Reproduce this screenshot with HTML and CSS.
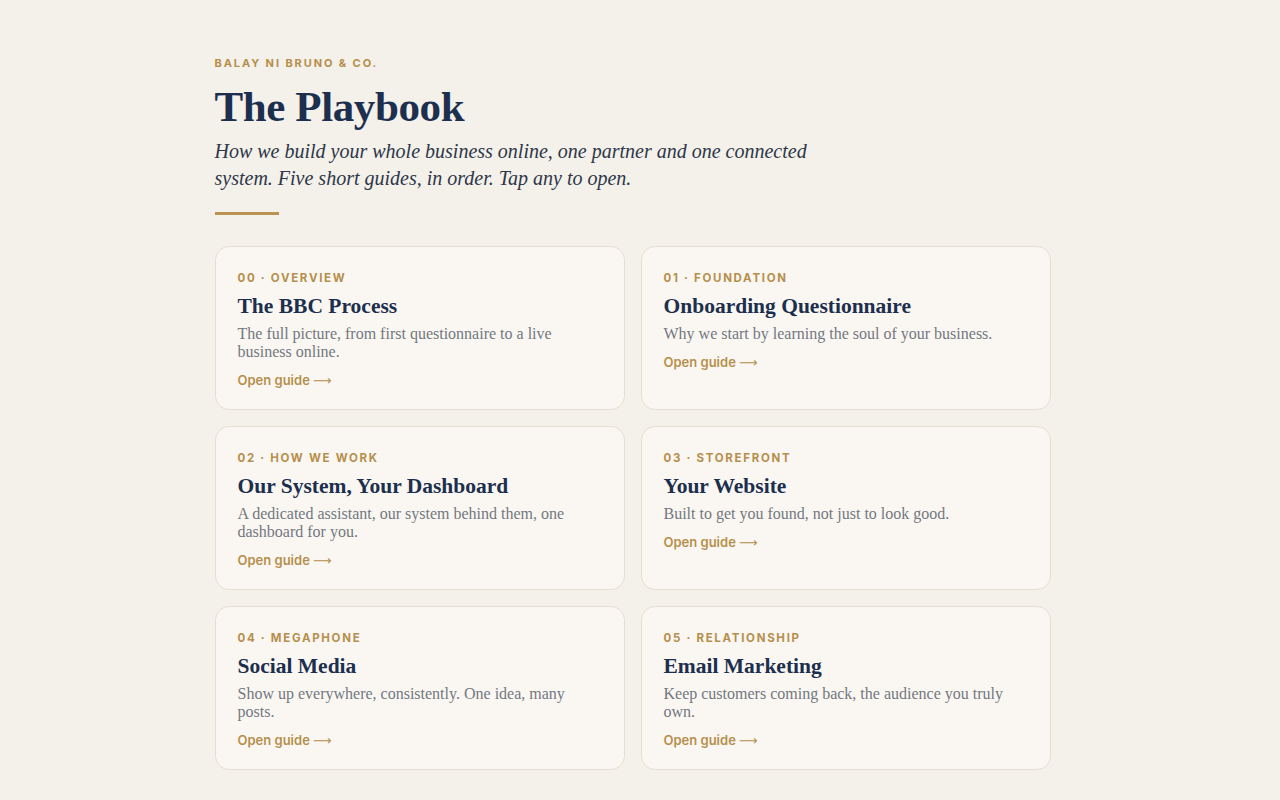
FILE: index.html
```html
<!DOCTYPE html>
<html lang="en">
<head>
<meta charset="UTF-8">
<meta name="viewport" content="width=device-width, initial-scale=1.0">
<title>The Playbook</title>
<link rel="stylesheet" href="styles.css">
</head>
<body>

<div class="container">
    <header class="intro">
        <p class="eyebrow">Balay ni Bruno &amp; Co.</p>
        <h1>The Playbook</h1>
        <p class="lead">How we build your whole business online, one partner and one connected system. Five short guides, in order. Tap any to open.</p>
        <div class="rule"></div>
    </header>

    <div class="guides">
        <a class="card" href="#">
            <span class="tag">00 · Overview</span>
            <h3>The BBC Process</h3>
            <p>The full picture, from first questionnaire to a live business online.</p>
            <span class="more">Open guide <span class="arrow">⟶</span></span>
        </a>
        <a class="card" href="#">
            <span class="tag">01 · Foundation</span>
            <h3>Onboarding Questionnaire</h3>
            <p>Why we start by learning the soul of your business.</p>
            <span class="more">Open guide <span class="arrow">⟶</span></span>
        </a>
        <a class="card" href="#">
            <span class="tag">02 · How we work</span>
            <h3>Our System, Your Dashboard</h3>
            <p>A dedicated assistant, our system behind them, one dashboard for you.</p>
            <span class="more">Open guide <span class="arrow">⟶</span></span>
        </a>
        <a class="card" href="#">
            <span class="tag">03 · Storefront</span>
            <h3>Your Website</h3>
            <p>Built to get you found, not just to look good.</p>
            <span class="more">Open guide <span class="arrow">⟶</span></span>
        </a>
        <a class="card" href="#">
            <span class="tag">04 · Megaphone</span>
            <h3>Social Media</h3>
            <p>Show up everywhere, consistently. One idea, many posts.</p>
            <span class="more">Open guide <span class="arrow">⟶</span></span>
        </a>
        <a class="card" href="#">
            <span class="tag">05 · Relationship</span>
            <h3>Email Marketing</h3>
            <p>Keep customers coming back, the audience you truly own.</p>
            <span class="more">Open guide <span class="arrow">⟶</span></span>
        </a>
    </div>
</div>

</body>
</html>
```

FILE: styles.css
```css
html {
    overflow-y: scroll;
}
body {
    margin: 0;
    padding: 0 15px 0 0;
    background-color: #f4f0ea;
    font-family: "Liberation Serif", "DejaVu Serif", serif;
    color: #1d2f4e;
}
.container {
    max-width: 836px;
    margin: 0 auto;
    padding: 56px 0 145px;
}
.eyebrow {
    margin: 0;
    font-family: Inter, "Noto Sans", sans-serif;
    font-size: 11px;
    line-height: 14px;
    font-weight: 700;
    letter-spacing: 1.9px;
    text-transform: uppercase;
    color: #b68f4c;
}
h1 {
    margin: 13px 0 0;
    font-family: "Liberation Serif", "DejaVu Serif", serif;
    font-size: 43px;
    line-height: 48px;
    font-weight: 700;
    letter-spacing: -0.4px;
    color: #1d2f4e;
}
.lead {
    margin: 7px 0 0;
    max-width: 620px;
    font-size: 20px;
    line-height: 27px;
    font-style: italic;
    color: #2d3748;
}
.rule {
    width: 64px;
    height: 3px;
    margin-top: 20px;
    background-color: #bb9350;
}
.guides {
    display: grid;
    grid-template-columns: 1fr 1fr;
    gap: 16px;
    margin-top: 31px;
}
.card {
    display: flex;
    flex-direction: column;
    align-items: flex-start;
    padding: 23px 22px 20px;
    background-color: #faf7f2;
    border: 1px solid #e6ded1;
    border-radius: 14px;
    text-decoration: none;
    transition: border-color 0.2s;
}
.card:hover {
    border-color: #cdb48a;
}
.tag {
    font-family: Inter, "Noto Sans", sans-serif;
    font-size: 11.5px;
    line-height: 16px;
    font-weight: 700;
    letter-spacing: 1.7px;
    text-transform: uppercase;
    color: #b68f4c;
}
.card h3 {
    margin: 6px 0 0;
    font-size: 21.5px;
    line-height: 28px;
    font-weight: 700;
    color: #1d2f4e;
}
.card p {
    margin: 5px 0 0;
    font-size: 16px;
    line-height: 18px;
    color: #737880;
}
.card .more {
    margin-top: 11px;
    font-family: Inter, "Noto Sans", sans-serif;
    font-size: 13px;
    line-height: 16px;
    font-weight: 600;
    color: #b68f4c;
}
.card .arrow {
    font-family: "DejaVu Sans", sans-serif;
    font-weight: 400;
}
```
